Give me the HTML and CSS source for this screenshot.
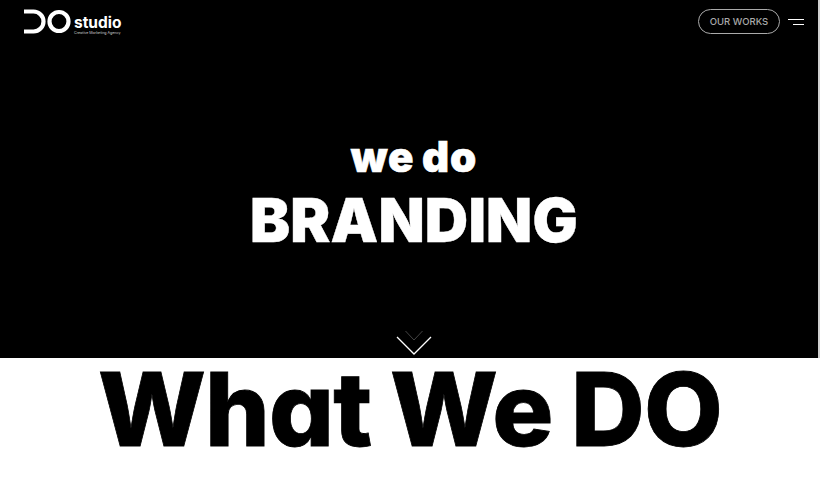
FILE: index.html
```html
<!DOCTYPE html>
<html>
<head>
  <title>DO studio</title>
  <link rel="stylesheet" href="styles.css">
</head>
<body>
  <section class="hero">
    <header class="topbar">
      <a class="logo" href="#">
        <svg class="logo-mark" width="48" height="25" viewBox="0 0 48 25">
          <path d="M1 2.500h9.500a10 10 0 0 1 0 20H1" fill="none" stroke="#fff" stroke-width="4.200"/>
          <circle cx="36" cy="12.500" r="9.500" fill="none" stroke="#fff" stroke-width="4.200"/>
        </svg>
        <span class="logo-text">
          <span class="logo-name">studio</span>
          <span class="logo-sub">Creative Marketing Agency</span>
        </span>
      </a>
      <div class="top-actions">
        <a class="works-btn" href="#">OUR WORKS</a>
        <button class="menu-btn"><span></span><span></span></button>
      </div>
    </header>
    <div class="hero-main">
      <div class="hero-text">
        <div class="hero-small">we do</div>
        <div class="hero-big">BRANDING</div>
      </div>
      <svg class="scroll-arrow" width="36" height="26" viewBox="0 0 36 26">
        <path d="M9.500 1l8.500 9 8.500-9" fill="none" stroke="#444" stroke-width="1"/>
        <path d="M1 7l17 17 17-17" fill="none" stroke="#fff" stroke-width="1.300"/>
      </svg>
    </div>
  </section>
  <section class="what">
    <h1>What We DO</h1>
  </section>
</body>
</html>
```

FILE: styles.css
```css
html, body { margin: 0; padding: 0; }
body { font-family: "Inter", "Liberation Sans", sans-serif; font-feature-settings: "cv11"; background: #fff; height: 495px; overflow: hidden; }
a { color: inherit; text-decoration: none; }

.hero {
  background: #000; color: #fff; height: 358px; box-sizing: border-box;
  border-right: 2px solid #d0d0d0;
  display: flex; flex-direction: column;
}
.topbar {
  display: flex; justify-content: space-between; align-items: flex-start;
  padding: 9px 14px 0 23px; height: 42px; box-sizing: border-box;
}
.logo { display: flex; align-items: flex-start; gap: 3px; }
.logo-mark { display: block; }
.logo-text { display: flex; flex-direction: column; margin-top: 5px; width: 47px; }
.logo-name { font-size: 15.500px; font-weight: 700; line-height: 17px; }
.logo-sub { font-size: 3.600px; line-height: 5px; color: #ccc; white-space: nowrap; }
.top-actions { display: flex; align-items: center; gap: 8px; }
.works-btn {
  display: block; width: 82px; height: 25px; box-sizing: border-box;
  border: 1.500px solid #aaa; border-radius: 13px; color: #aaa;
  font-size: 9.500px; font-weight: 500; line-height: 24px; text-align: center;
}
.menu-btn { background: none; border: 0; padding: 0; margin-top: 1px; width: 16px; display: flex; flex-direction: column; align-items: flex-end; gap: 3.500px; }
.menu-btn span { display: block; height: 1.500px; background: #fff; width: 16px; }
.menu-btn span + span { width: 11px; }

.hero-main { flex: 1; display: flex; flex-direction: column; align-items: center; padding: 89px 0 2px 10px; }
.hero-text { text-align: center; font-weight: 900; }
.hero-small { font-size: 42px; line-height: 52px; letter-spacing: 1px; word-spacing: -2px; -webkit-text-stroke: 0.6px #fff; }
.hero-big { font-size: 60px; line-height: 72px; margin-top: 1px; letter-spacing: 0.2px; -webkit-text-stroke: 0.4px #fff; }
.scroll-arrow { margin-top: auto; display: block; }

.what { text-align: center; }
.what h1 {
  margin: 0; font-weight: 800; font-size: 102px; line-height: 103px; color: #000;
  letter-spacing: -0.8px; word-spacing: -3px; -webkit-text-stroke: 0.8px #000;
}
```
